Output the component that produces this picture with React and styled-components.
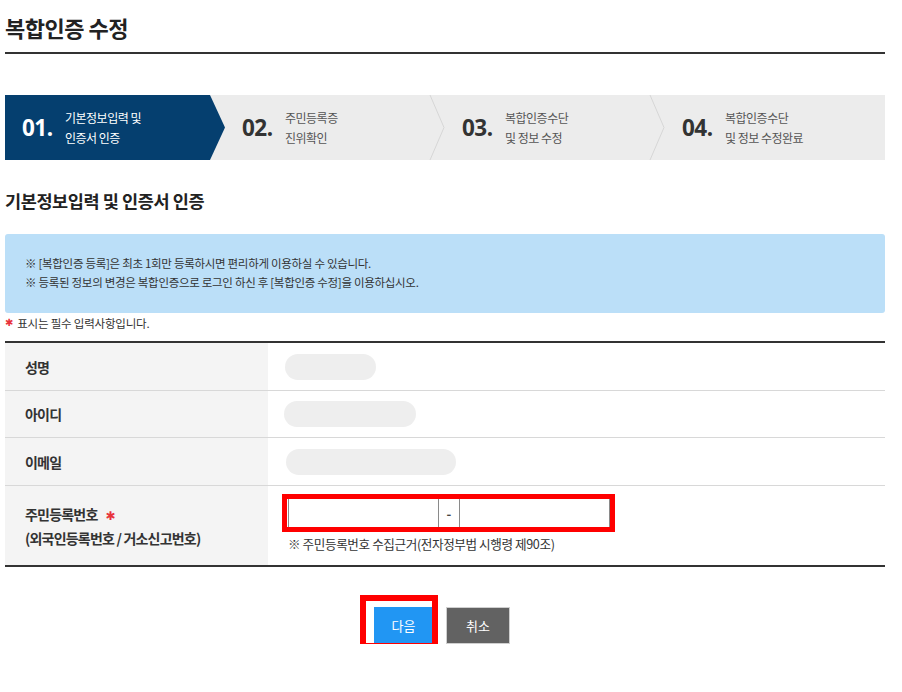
import React from "react";
import styled, { createGlobalStyle } from "styled-components";

const GlobalStyle = createGlobalStyle`
  html, body {
    margin: 0;
    padding: 0;
    background: #fff;
  }
  body {
    font-family: "Noto Sans CJK KR", "Noto Sans", sans-serif;
    color: #333;
  }
`;

const Page = styled.div`
  width: 880px;
  padding-left: 5px;
`;

const Title = styled.h1`
  margin: 0;
  padding: 10px 0 8px;
  font-size: 22px;
  line-height: 34px;
  font-weight: 700;
  color: #222;
  letter-spacing: -0.5px;
  border-bottom: 2px solid #333;
`;

const StepBar = styled.ol`
  list-style: none;
  margin: 41px 0 0;
  padding: 0;
  height: 65px;
  display: flex;
  background: #ececec;
`;

const Step = styled.li`
  position: relative;
  width: 220px;
  display: flex;
  align-items: center;
  padding-left: 17px;
  box-sizing: border-box;
  background: ${p => (p.$active ? "#053f6f" : "transparent")};
  clip-path: ${p =>
    p.$active
      ? "polygon(0 0, calc(100% - 15px) 0, 100% 50%, calc(100% - 15px) 100%, 0 100%)"
      : "none"};
`;

const StepNum = styled.span`
  font-family: "Noto Sans", "Liberation Sans", sans-serif;
  font-size: 22.5px;
  font-weight: 700;
  letter-spacing: -0.5px;
  width: 43px;
  flex-shrink: 0;
  color: ${p => (p.$active ? "#fff" : "#333")};
`;

const StepText = styled.span`
  font-size: 12px;
  line-height: 20px;
  letter-spacing: -0.5px;
  color: ${p => (p.$active ? "#fff" : "#555")};
`;

const Chevron = styled.svg`
  position: absolute;
  right: 0;
  top: 0;
  width: 16px;
  height: 65px;
`;

const SectionTitle = styled.h2`
  margin: 29px 0 0;
  font-size: 17.5px;
  line-height: 24px;
  font-weight: 700;
  color: #222;
  letter-spacing: -0.4px;
`;

const InfoBox = styled.div`
  margin-top: 21px;
  padding: 20px 20px 21px;
  background: #bbdff8;
  border-radius: 3px;
  font-size: 11.5px;
  line-height: 19px;
  color: #333;
  letter-spacing: -0.3px;
`;

const Required = styled.p`
  margin: 2px 0 0;
  height: 16px;
  display: flex;
  align-items: center;
  font-size: 11.5px;
  line-height: 16px;
  color: #333;
  letter-spacing: -0.2px;
`;

const Star = styled.span`
  display: inline-block;
  font-family: "DejaVu Sans", sans-serif;
  line-height: 1;
  color: #e8333c;
  font-size: ${p => (p.$gap ? "12px" : "10px")};
  margin-right: ${p => (p.$gap ? "0" : "4px")};
  margin-left: ${p => (p.$gap ? "8px" : "0")};
`;

const Table = styled.div`
  margin-top: 10px;
  border-top: 2px solid #333;
  border-bottom: 2px solid #333;
`;

const Row = styled.div`
  display: flex;
  height: ${p => p.$h}px;
  box-sizing: border-box;
  border-top: ${p => (p.$first ? "none" : "1px solid #d8d8d8")};
`;

const Label = styled.div`
  width: 263px;
  flex-shrink: 0;
  background: #f4f4f4;
  padding-left: 20px;
  box-sizing: border-box;
  display: flex;
  flex-direction: column;
  justify-content: center;
  font-size: 14px;
  font-weight: 700;
  line-height: 24px;
  color: #333;
  letter-spacing: -0.8px;
`;

const Value = styled.div`
  flex: 1;
  display: flex;
  flex-direction: column;
  justify-content: center;
  padding-left: ${p => p.$pad || 17}px;
`;

const Pill = styled.div`
  width: ${p => p.$w}px;
  height: 26px;
  border-radius: 13px;
  background: #eeeeee;
`;

const Highlight = styled.div`
  position: relative;
  align-self: flex-start;
  &::after {
    content: "";
    position: absolute;
    top: ${p => p.$t}px;
    left: ${p => p.$l}px;
    right: ${p => p.$r}px;
    bottom: ${p => p.$b}px;
    border: ${p => p.$bw}px solid #ff0000;
    pointer-events: none;
  }
`;

const RrnGroup = styled.div`
  display: flex;
  align-items: center;
`;

const RrnInput = styled.input`
  width: 151px;
  height: 30px;
  box-sizing: border-box;
  border: 1px solid #8a8a8a;
  background: #fff;
  padding: 0 6px;
  outline: none;
`;

const Dash = styled.span`
  width: 20px;
  text-align: center;
  font-size: 13px;
  font-weight: 700;
  color: #444;
`;

const Note = styled.p`
  margin: 8px 0 0;
  font-size: 12.6px;
  line-height: 16px;
  color: #333;
  letter-spacing: -0.4px;
`;

const RrnCell = styled(Value)`
  padding-top: 12px;
  padding-left: 20px;
  justify-content: flex-start;
`;

const Actions = styled.div`
  display: flex;
  justify-content: center;
  gap: 13px;
  margin-top: 40px;
  padding-right: 6px;
`;

const Button = styled.button`
  height: ${p => (p.$primary ? 36 : 37)}px;
  width: ${p => (p.$primary ? 59 : 64)}px;
  border: ${p => (p.$primary ? "none" : "1px solid #cfcfcf")};
  background: ${p => (p.$primary ? "#2196f3" : "#626262")};
  color: #fff;
  font-family: "Noto Sans CJK KR", sans-serif;
  font-size: 13px;
  cursor: pointer;
  padding: 0;
`;

const steps = [
  { n: "01.", a: "기본정보입력 및", b: "인증서 인증" },
  { n: "02.", a: "주민등록증", b: "진위확인" },
  { n: "03.", a: "복합인증수단", b: "및 정보 수정" },
  { n: "04.", a: "복합인증수단", b: "및 정보 수정완료" }
];

export default function App() {
  return (
    <Page>
      <GlobalStyle />
      <Title>복합인증 수정</Title>

      <StepBar>
        {steps.map((s, i) => {
          const active = i === 0;
          return (
            <Step key={s.n} $active={active}>
              <StepNum $active={active}>{s.n}</StepNum>
              <StepText $active={active}>
                {s.a}
                <br />
                {s.b}
              </StepText>
              {i > 0 && i < 3 && (
                <Chevron viewBox="0 0 16 65">
                  <polyline
                    points="1,0 15,32.5 1,65"
                    fill="none"
                    stroke="#d6d6d6"
                    strokeWidth="1"
                  />
                </Chevron>
              )}
            </Step>
          );
        })}
      </StepBar>

      <SectionTitle>기본정보입력 및 인증서 인증</SectionTitle>

      <InfoBox>
        ※ [복합인증 등록]은 최초 1회만 등록하시면 편리하게 이용하실 수 있습니다.
        <br />
        ※ 등록된 정보의 변경은 복합인증으로 로그인 하신 후 [복합인증 수정]을 이용하십시오.
      </InfoBox>

      <Required>
        <Star>✱</Star>표시는 필수 입력사항입니다.
      </Required>

      <Table>
        <Row $first $h={47}>
          <Label>성명</Label>
          <Value>
            <Pill $w={91} />
          </Value>
        </Row>
        <Row $h={47}>
          <Label>아이디</Label>
          <Value $pad={16}>
            <Pill $w={132} />
          </Value>
        </Row>
        <Row $h={48}>
          <Label>이메일</Label>
          <Value $pad={18}>
            <Pill $w={170} />
          </Value>
        </Row>
        <Row $h={80}>
          <Label>
            <span>
              주민등록번호<Star $gap>✱</Star>
            </span>
            <span>(외국인등록번호 / 거소신고번호)</span>
          </Label>
          <RrnCell>
            <Highlight $t={-4} $b={-4} $l={-6} $r={-5} $bw={5}>
              <RrnGroup>
                <RrnInput type="text" />
                <Dash>-</Dash>
                <RrnInput type="password" />
              </RrnGroup>
            </Highlight>
            <Note>※ 주민등록번호 수집근거(전자정부법 시행령 제90조)</Note>
          </RrnCell>
        </Row>
      </Table>

      <Actions>
        <Highlight $t={-12} $b={-6} $l={-14} $r={-5} $bw={6}>
          <Button $primary>다음</Button>
        </Highlight>
        <Button>취소</Button>
      </Actions>
    </Page>
  );
}
